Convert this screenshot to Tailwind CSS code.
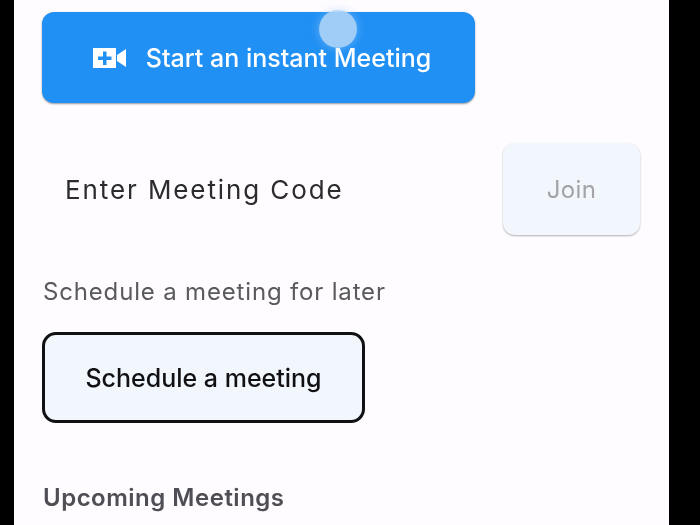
<!DOCTYPE html>
<html lang="en">
<head>
    <meta charset="UTF-8">
    <title>Meetings</title>
    <script src="https://cdn.jsdelivr.net/npm/@tailwindcss/browser@4"></script>
</head>
<body class="bg-black h-[525px] w-[700px] overflow-hidden font-['Inter','Liberation_Sans',sans-serif]">
    <div class="relative ml-[14px] w-[655px] h-[525px] bg-[#fefcff] pl-[28px] pr-[29px] pt-[12px] overflow-hidden blur-[0.5px]">
        <button class="relative w-[433px] h-[91px] bg-[#2090f4] rounded-[12px] shadow-[0_1px_2px_rgba(0,0,0,0.4)] flex items-center justify-center gap-[19px] text-white text-[25px] font-medium leading-none pl-[7px]">
            <svg width="34" height="22" viewBox="0 0 34 22" class="mt-[1px]">
                <path fill="#ffffff" d="M0 1h23v20H0z M24 8l9-6v18l-9-6z"/>
                <path fill="#2090f4" d="M10 4.500h3.500v5h5v3.500h-5v5H10v-5H5V9.500h5z"/>
            </svg>
            <span class="mt-[1px]">Start an instant Meeting</span>
        </button>
        <div class="absolute left-[305px] top-[10px] w-[38px] h-[38px] rounded-full bg-[#add4f8]/90 shadow-[0_0_10px_rgba(170,210,250,0.5)]"></div>

        <div class="flex items-center justify-between mt-[40px]">
            <span class="ml-[23px] text-[26px] leading-none text-[#2b2b30] tracking-[1.9px] mt-[2px]">Enter Meeting Code</span>
            <button class="w-[137px] h-[92px] bg-[#f2f6fd] rounded-[12px] shadow-[0_1px_2px_rgba(0,0,0,0.3)] text-[24px] tracking-[0.3px] leading-none text-[#a3a3a8] pt-[2px]">Join</button>
        </div>

        <p class="mt-[42px] ml-[1px] text-[24px] leading-[30px] text-[#59595e] tracking-[0.83px]">Schedule a meeting for later</p>

        <button class="block mt-[25px] w-[323px] h-[91px] bg-[#f2f6fd] border-[3px] border-[#111114] rounded-[14px] text-[25px] font-medium leading-none text-[#111114] pt-[2px]">Schedule a meeting</button>

        <h2 class="mt-[60px] ml-[1px] text-[24px] leading-[30px] font-semibold text-[#4e4e54] tracking-[0.5px]">Upcoming Meetings</h2>
    </div>
</body>
</html>
